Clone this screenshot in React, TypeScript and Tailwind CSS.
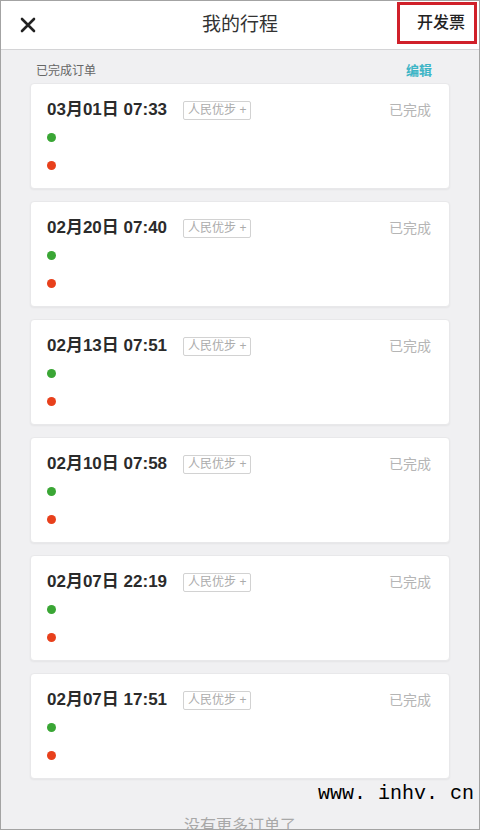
import React from 'react'

type Trip = {
  date: string
  time: string
}

const trips: Trip[] = [
  { date: '03月01日', time: '07:33' },
  { date: '02月20日', time: '07:40' },
  { date: '02月13日', time: '07:51' },
  { date: '02月10日', time: '07:58' },
  { date: '02月07日', time: '22:19' },
  { date: '02月07日', time: '17:51' },
]

const font = { fontFamily: '"Liberation Sans", "Noto Sans CJK SC", sans-serif' }

const TripCard: React.FC<{ trip: Trip }> = ({ trip }) => {
  return (
    <div className="h-[106px] bg-white rounded-[4px] border border-[#e8e8ea] shadow-[0_1px_2px_rgba(0,0,0,0.05)] pl-[16px] pr-[18px] pt-[16px]">
      {/* 时间 + 车型 */}
      <div className="flex items-center h-[20px]">
        <div className="text-[17px] font-bold text-[#2b2b2b] leading-[20px]">
          {trip.date} {trip.time}
        </div>
        <div className="ml-[16px] h-[19px] px-[4px] border border-[#d2d2d2] rounded-[2px] text-[12px] leading-[17px] text-[#ababab]">
          人民优步 +
        </div>
        <div className="ml-auto text-[14px] text-[#b5b5b5] leading-[20px]">已完成</div>
      </div>
      <div className="mt-[13px] w-[9px] h-[9px] rounded-full bg-[#3aa635]" />
      <div className="mt-[19px] w-[9px] h-[9px] rounded-full bg-[#e8401c]" />
    </div>
  )
}

export default function App() {
  return (
    <div
      className="relative w-[480px] h-[830px] overflow-hidden border border-[#a3a3a3] bg-[#f0f0f2] flex flex-col"
      style={font}
    >
      {/* 顶部栏 */}
      <div className="h-[49px] shrink-0 bg-white border-b border-[#d4d4d6] grid grid-cols-[82px_1fr_82px] items-center">
        <div className="pl-[19px]">
          <svg width="16" height="16" viewBox="0 0 16 16">
            <path d="M2 2 L14 14 M14 2 L2 14" stroke="#222" strokeWidth="2.6" strokeLinecap="round" />
          </svg>
        </div>
        <div className="text-center text-[19px] text-[#333]">我的行程</div>
        <div className="self-start mt-[1px] w-[80px] h-[42px] border-[3px] border-[#d0202a] flex items-center justify-end pr-[9px] text-[16px] font-medium text-[#222]">
          开发票
        </div>
      </div>

      <div className="px-[29px] flex flex-col">
        <div className="h-[33px] flex items-end justify-between pb-[4px] pl-[6px] pr-[18px]">
          <div className="text-[12px] leading-[16px] text-[#666]">已完成订单</div>
          <div className="text-[13px] leading-[16px] font-bold text-[#3db5c6]">编辑</div>
        </div>
        <div className="flex flex-col gap-[12px]">
          {trips.map((trip, i) => (
            <TripCard key={`${trip.date}-${trip.time}-${i}`} trip={trip} />
          ))}
        </div>
        <div className="mt-[36px] text-center text-[16px] leading-[22px] text-[#a8a8a8]">没有更多订单了</div>
      </div>

      {/* 水印 */}
      <div
        className="absolute left-[317px] top-[781px] text-[20px] leading-[24px] text-black whitespace-pre"
        style={{ fontFamily: '"Liberation Mono", monospace' }}
      >
        www. inhv. cn
      </div>
    </div>
  )
}
